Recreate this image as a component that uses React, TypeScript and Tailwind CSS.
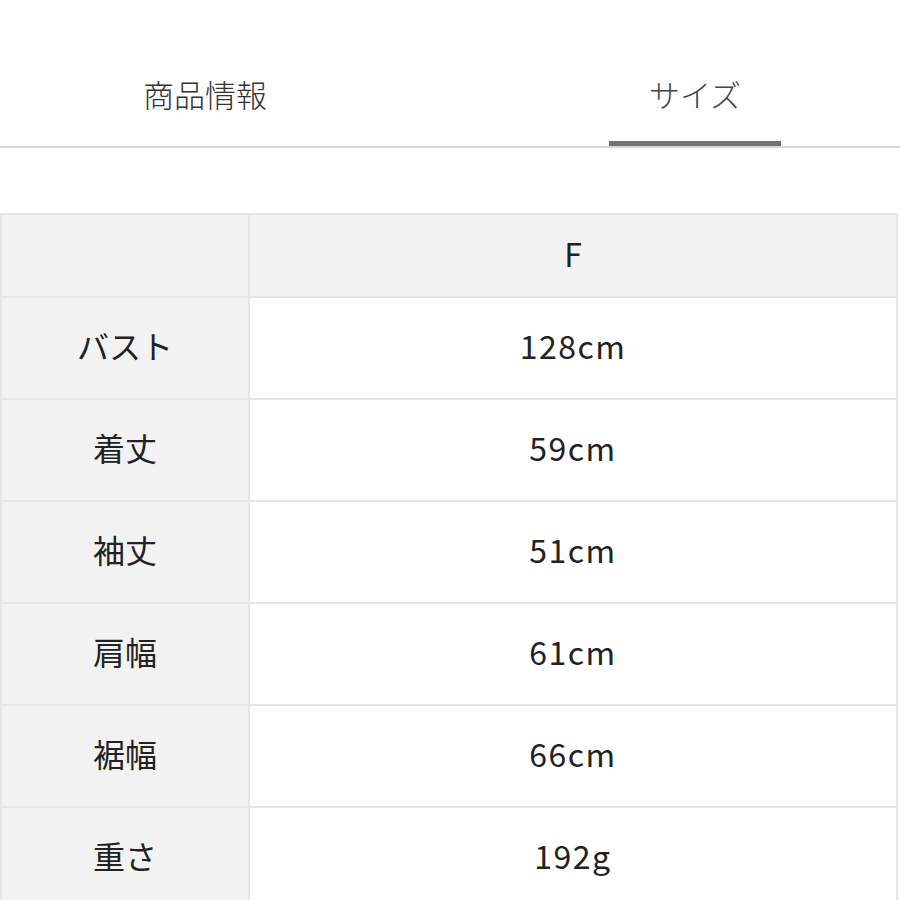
import React from 'react';

const rows: [string, string][] = [
  ['バスト', '128cm'],
  ['着丈', '59cm'],
  ['袖丈', '51cm'],
  ['肩幅', '61cm'],
  ['裾幅', '66cm'],
  ['重さ', '192g'],
];

const font = { fontFamily: '"Noto Sans CJK JP", "Noto Sans", sans-serif' };

const App: React.FC = () => {
  return (
    <div className="w-[900px] h-[900px] overflow-hidden bg-white" style={font}>
      {/* Tabs */}
      <div className="flex justify-between border-b-2 border-[#d6d6d6]">
        <div className="w-[410px] pt-[74px] flex flex-col items-center">
          <span className="text-[31px] leading-[40px] font-light text-[#333]">商品情報</span>
          <div className="h-[32px]" />
        </div>
        <div className="w-[410px] pt-[74px] flex flex-col items-center">
          <span className="text-[31px] leading-[40px] font-light text-[#444]">サイズ</span>
          <div className="h-[27px]" />
          <div className="w-[172px] h-[5px] bg-[#737373]" />
        </div>
      </div>

      {/* Size table */}
      <div className="mt-[65px] w-[898px] bg-[#e6e6e6] p-[2px] grid grid-cols-[246px_1fr] gap-[2px] text-[32px] font-normal text-[#222]">
        <div className="h-[81px] bg-[#f2f2f2]" />
        <div className="h-[81px] pb-[6px] bg-[#f2f2f2] flex items-center justify-center">F</div>
        {rows.map(([label, value]) => (
          <React.Fragment key={label}>
            <div className="h-[100px] pb-[6px] bg-[#f2f2f2] flex items-center justify-center">{label}</div>
            <div className="h-[100px] pb-[6px] bg-white flex items-center justify-center tracking-[1.5px]">{value}</div>
          </React.Fragment>
        ))}
      </div>
    </div>
  );
};

export default App;
